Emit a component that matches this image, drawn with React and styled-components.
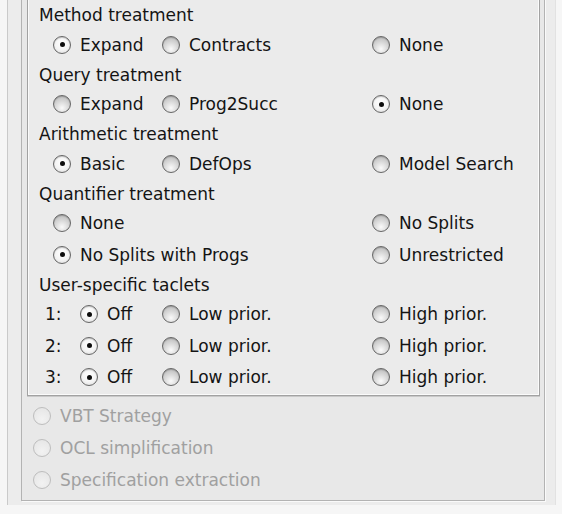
import React from "react";
import styled, { createGlobalStyle } from "styled-components";

const GlobalStyle = createGlobalStyle`
  html, body {
    margin: 0;
    background: #f6f6f6;
    overflow: hidden;
  }
  body {
    font-family: "DejaVu Sans", "Liberation Sans", sans-serif;
    font-size: 17px;
    color: #141414;
  }
`;

// outer window strip
const Window = styled.div`
  margin: -30px 0 0 7px;
  width: 549px;
  box-sizing: border-box;
  border-left: 1px solid #cacaca;
  border-right: 1px solid #e2e2e2;
  background: #ececec;
  padding: 0 10px 4px 13px;
`;

const Group = styled.div`
  border: 1px solid #b3b3b3;
  box-shadow: 1px 1px 0 #fafafa;
  background: #e8e8e8;
  padding: 4px 4px 4px 5px;
`;

const Box = styled.div`
  border: 1px solid #a2a2a2;
  box-shadow: inset 0 0 0 1px #fbfbfb, 0 1px 0 #c9c9c9;
  background: #ebebeb;
  padding: 25px 11px 2px 11px;
`;

const Heading = styled.div`
  height: 28px;
  line-height: 28px;
  white-space: nowrap;
`;

const Row = styled.div`
  height: 31.5px;
  display: grid;
  align-items: center;
  padding-left: ${(p) => (p.$numbered ? "6px" : "14px")};
  grid-template-columns: ${(p) =>
    p.$numbered ? "35px 82px 210px 1fr" : "109px 210px 1fr"};
`;

const Option = styled.label`
  display: inline-flex;
  align-items: center;
  gap: 9px;
  white-space: nowrap;
  color: ${(p) => (p.$disabled ? "#a0a0a0" : "#141414")};
`;

const Dot = styled.span`
  flex: none;
  width: 18px;
  height: 18px;
  box-sizing: border-box;
  border-radius: 50%;
  border: 1.5px solid ${(p) => (p.$disabled ? "#bdbdbd" : "#666")};
  background: ${(p) =>
    p.$disabled
      ? "radial-gradient(circle at 50% 70%, #f2f2f2 0%, #e4e4e4 100%)"
      : p.$on
      ? "radial-gradient(circle at 50% 40%, #ffffff 0%, #f4f4f4 55%, #d4d4d4 100%)"
      : "radial-gradient(circle at 50% 75%, #fafafa 0%, #d2d2d2 55%, #b2b2b2 100%)"};
  box-shadow: ${(p) =>
    p.$disabled ? "none" : "inset 0 1px 1px rgba(0, 0, 0, 0.2)"};
  display: flex;
  align-items: center;
  justify-content: center;
  &::after {
    content: "";
    display: ${(p) => (p.$on ? "block" : "none")};
    width: 5px;
    height: 5px;
    border-radius: 50%;
    background: #0d0d0d;
  }
`;

const Number = styled.span``;

const Extras = styled.div`
  padding: 4px 0 0 6px;
`;

const ExtraRow = styled.div`
  height: 32px;
  display: flex;
  align-items: center;
`;

const Radio = ({ on, disabled, children }) => (
  <Option $disabled={disabled}>
    <Dot $on={on} $disabled={disabled} />
    {children}
  </Option>
);

const sections = [
  {
    title: "Method treatment",
    rows: [[["Expand", true], ["Contracts"], ["None"]]],
  },
  {
    title: "Query treatment",
    rows: [[["Expand"], ["Prog2Succ"], ["None", true]]],
  },
  {
    title: "Arithmetic treatment",
    rows: [[["Basic", true], ["DefOps"], ["Model Search"]]],
  },
  {
    title: "Quantifier treatment",
    rows: [
      [["None"], null, ["No Splits"]],
      [["No Splits with Progs", true], null, ["Unrestricted"]],
    ],
  },
];

export default function App() {
  return (
    <>
      <GlobalStyle />
      <Window>
        <Group>
          <Box>
            {sections.map((s) => (
              <React.Fragment key={s.title}>
                <Heading>{s.title}</Heading>
                {s.rows.map((r, i) => (
                  <Row key={i}>
                    {r.map((o, j) =>
                      o ? (
                        <Radio key={j} on={o[1]}>
                          {o[0]}
                        </Radio>
                      ) : (
                        <span key={j} />
                      )
                    )}
                  </Row>
                ))}
              </React.Fragment>
            ))}
            <Heading>User-specific taclets</Heading>
            {[1, 2, 3].map((n) => (
              <Row key={n} $numbered>
                <Number>{n}:</Number>
                <Radio on>Off</Radio>
                <Radio>Low prior.</Radio>
                <Radio>High prior.</Radio>
              </Row>
            ))}
          </Box>
          <Extras>
            <ExtraRow>
              <Radio disabled>VBT Strategy</Radio>
            </ExtraRow>
            <ExtraRow>
              <Radio disabled>OCL simplification</Radio>
            </ExtraRow>
            <ExtraRow>
              <Radio disabled>Specification extraction</Radio>
            </ExtraRow>
          </Extras>
        </Group>
      </Window>
    </>
  );
}
